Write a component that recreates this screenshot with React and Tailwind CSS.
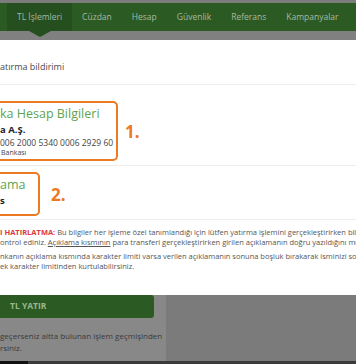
import React from 'react'

const tabs = ['TL İşlemleri', 'Cüzdan', 'Hesap', 'Güvenlik', 'Referans', 'Kampanyalar']

function NavBar() {
  return (
    <div className="relative">
      <div className="h-[3px] bg-[#7c7c7c]" />
      <div className="h-[28px] bg-[#2b5a23] flex items-stretch pl-[7px]">
        {tabs.map((tab, i) => (
          <div
            key={tab}
            className={`relative flex items-center px-[10px] text-[8.5px] text-[#a7b9a2] whitespace-nowrap ${
              i === 0 ? 'bg-[#254f1f]' : ''
            }`}
          >
            {tab}
            {i === 0 && (
              <div className="absolute left-1/2 -translate-x-1/2 top-full w-0 h-0 border-l-[11px] border-r-[11px] border-t-[6px] border-l-transparent border-r-transparent border-t-[#254f1f]" />
            )}
          </div>
        ))}
      </div>
      <div className="h-[9px] bg-[#808080]" />
    </div>
  )
}

function Modal() {
  return (
    <div className="h-[255px] bg-white text-[#555] overflow-hidden">
      {/* header */}
      <div className="h-[45px] pt-[21px] border-b border-[#ececec] text-[9px] leading-[12px] text-[#4a4a4a] whitespace-nowrap">
        atırma bildirimi
      </div>

      {/* bank info */}
      <div className="pt-[16px] pb-[4px] border-b border-[#ececec] flex items-center">
        <div className="-ml-[12px] w-[130px] h-[60px] pl-[10px] border-2 border-[#ec7a23] rounded-[5px] flex flex-col whitespace-nowrap overflow-hidden">
          <div className="text-[12.5px] leading-[15px] text-[#5ea350] mt-[3px]">ka Hesap Bilgileri</div>
          <div className="text-[9.5px] leading-[12px] font-bold text-[#222] mt-[3px]">a A.Ş.</div>
          <div className="text-[8.5px] leading-[11px] text-[#444] mt-[1px]">006 2000 5340 0006 2929 60</div>
          <div className="text-[7px] leading-[10px] text-[#444] pl-[1px]">Bankası</div>
        </div>
        <div className="ml-[7px] text-[17px] font-bold text-[#ec7a23] leading-none">1.</div>
      </div>

      {/* description */}
      <div className="pt-[6px] pb-[3px] border-b border-[#ececec] flex items-center">
        <div className="-ml-[12px] w-[52px] h-[44px] pl-[10px] border-2 border-[#ec7a23] rounded-[5px] flex flex-col whitespace-nowrap overflow-hidden">
          <div className="text-[12.5px] leading-[15px] text-[#5ea350] mt-[3px]">ama</div>
          <div className="text-[9.5px] leading-[12px] font-bold text-[#222] mt-[3px]">s</div>
        </div>
        <div className="ml-[11px] text-[17px] font-bold text-[#ec7a23] leading-none">2.</div>
      </div>

      {/* reminder */}
      <div className="pt-[7px] text-[7.5px] leading-[10px] whitespace-nowrap text-[#555]">
        <p>
          <span className="font-bold text-[#e0373a]">I HATIRLATMA:</span> Bu bilgiler her işleme özel tanımlandığı
          için lütfen yatırma işlemini gerçekleştirirken bilg
        </p>
        <p className="mb-[4px]">
          ontrol ediniz. <span className="underline">Açıklama kısmının</span> para transferi gerçekleştirirken girilen
          açıklamanın doğru yazıldığını mu
        </p>
        <p>nkanın açıklama kısmında karakter limiti varsa verilen açıklamanın sonuna boşluk bırakarak isminizi soya</p>
        <p>ek karakter limitinden kurtulabilirsiniz.</p>
      </div>
    </div>
  )
}

function PageBehind() {
  return (
    <div className="flex h-[66px]">
      <div className="w-[166px] bg-[#888888] flex flex-col">
        <div className="w-[154px] h-[23px] bg-[#2b5a23] rounded-r-[3px] flex items-center pl-[10px] text-[8.5px] font-bold text-[#9ab88e]">
          TL YATIR
        </div>
        <div className="pt-[12px] text-[8px] leading-[12px] text-[#3a3a3a] whitespace-nowrap">
          <div>geçerseniz altta bulunan işlem geçmişinden</div>
          <div>rsiniz.</div>
        </div>
      </div>
      <div className="flex-1 bg-[#7b7b7b]" />
    </div>
  )
}

export default function App() {
  return (
    <div className="w-[356px] h-[364px] overflow-hidden bg-[#7b7b7b] font-['Open_Sans',sans-serif] flex flex-col">
      <NavBar />
      <Modal />
      <PageBehind />
      <div className="flex h-[3px]">
        <div className="w-[28px] bg-[#111]" />
        <div className="flex-1 bg-[#3a3a3a]" />
      </div>
    </div>
  )
}
